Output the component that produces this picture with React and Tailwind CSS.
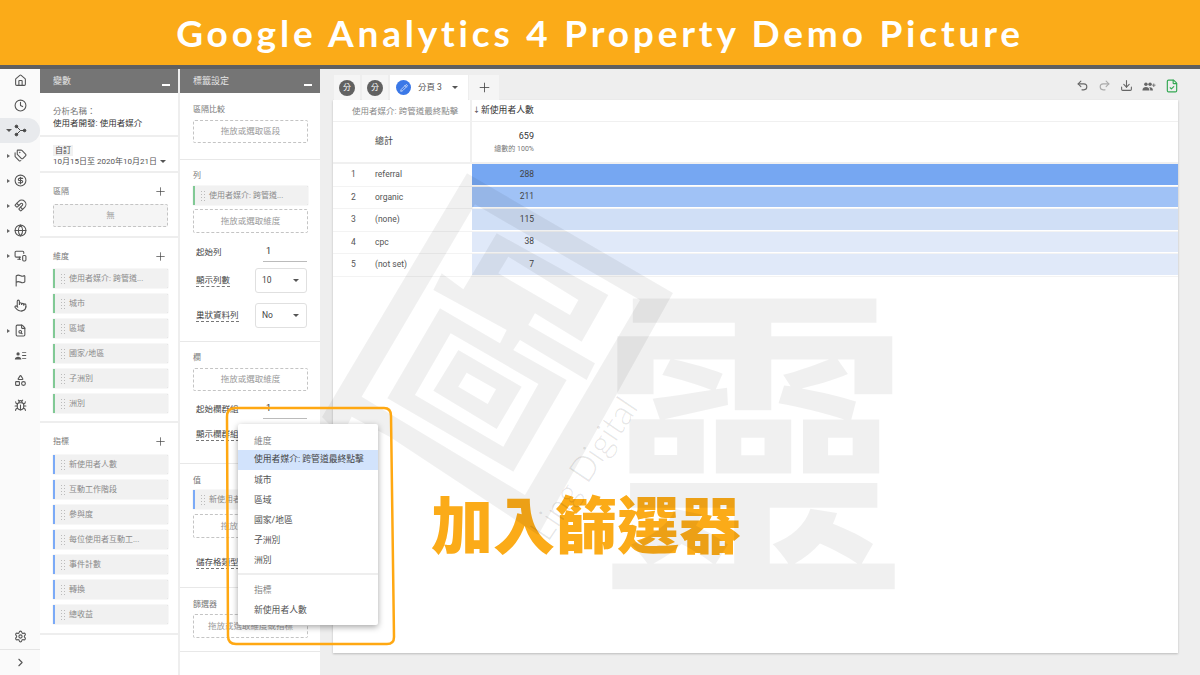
import {
  House, Clock, Tags, CircleDollarSign, Magnet, Globe, MonitorSmartphone, Flag, Pointer,
  FileSearch, Shapes, Bug, Settings, ChevronRight, Plus, Undo2, Redo2, Download,
  FileCheck, Pencil,
} from "lucide-react";

const cjk = "font-['Roboto','Noto_Sans_CJK_TC',sans-serif]";

function ExploreIcon() {
  return (
    <svg viewBox="0 0 16 16" className="w-[13px] h-[13px]" fill="#444" stroke="#444" strokeWidth="1.2">
      <path d="M3 3 L8 8 L3 13 M8 8 H13" fill="none" />
      <circle cx="3" cy="3" r="1.6" />
      <circle cx="3" cy="13" r="1.6" />
      <circle cx="13" cy="8" r="1.6" />
    </svg>
  );
}

function ListUserIcon() {
  return (
    <svg viewBox="0 0 16 16" className="w-[13px] h-[13px]" fill="#555">
      <circle cx="5" cy="6" r="2" />
      <path d="M1 13c0-2.500 2-3.500 4-3.500s4 1 4 3.500z" />
      <path d="M10 4h5v1h-5zM10 7.500h5v1h-5zM10 11h5v1h-5z" />
    </svg>
  );
}

function GroupAddIcon() {
  return (
    <svg viewBox="0 0 16 16" className="w-[14px] h-[14px]" fill="#666">
      <circle cx="4.500" cy="6" r="2" />
      <circle cx="9.200" cy="6" r="2" />
      <path d="M0.500 13c0-2.600 2-3.800 4-3.800s4 1.200 4 3.800z" />
      <path d="M9.400 13c0-1.500-.5-2.700-1.400-3.500 2.400-.6 4.500.8 4.500 3.500z" />
      <path d="M13 5h1v1.500h1.500v1H14V9h-1V7.500h-1.500v-1H13z" />
    </svg>
  );
}

function Caret({ className = "" }) {
  return <span className={`inline-block w-0 h-0 border-x-[3px] border-x-transparent border-t-[3px] border-t-[#555] ${className}`} />;
}

const navIcons = [
  [<House size={13} />, false],
  [<Clock size={13} />, false],
  [<ExploreIcon />, true, true],
  [<Tags size={13} />, true],
  [<CircleDollarSign size={13} />, true],
  [<Magnet size={13} />, true],
  [<Globe size={13} />, true],
  [<MonitorSmartphone size={13} />, true],
  [<Flag size={13} />, false],
  [<Pointer size={13} />, false],
  [<FileSearch size={13} />, true],
  [<ListUserIcon />, false],
  [<Shapes size={13} />, false],
  [<Bug size={13} />, false],
];

function Sidebar() {
  return (
    <aside className="w-[40px] h-full bg-[#fafafa] flex flex-col text-[#555]">
      <div className="flex flex-col -mt-[1px]">
        {navIcons.map(([icon, hasArrow, active], i) => (
          <div
            key={i}
            className={`relative h-[25px] flex items-center justify-center pl-[1px] ${active ? "bg-[#e8eaed] rounded-r-full" : ""}`}
          >
            {hasArrow && !active && <span className="absolute left-[7px] w-0 h-0 border-y-[2.5px] border-y-transparent border-l-[3px] border-l-[#666]" />}
            {active && <Caret className="absolute left-[6px]" />}
            {icon}
          </div>
        ))}
      </div>
      <div className="mt-auto">
        <div className="h-[26px] flex items-center justify-center border-b border-[#e5e5e5]">
          <Settings size={13} />
        </div>
        <div className="h-[25px] flex items-center justify-center">
          <ChevronRight size={13} />
        </div>
      </div>
    </aside>
  );
}

function PanelHeader({ title }) {
  return (
    <div className="h-[24px] bg-[#757575] text-[#e4e4e4] text-[9px] flex items-center justify-between pl-[13px] pr-[8px] pt-[1px]">
      <span>{title}</span>
      <span className="w-[8px] h-[1.5px] bg-white mt-[7px]" />
    </div>
  );
}

function Chip({ label, blue }) {
  return (
    <div
      className={`h-[19px] mb-[6px] bg-[#f1f1f1] border-l-2 ${blue ? "border-l-[#7baaf7]" : "border-l-[#81c995]"} shadow-[0_0_1px_#aaa] flex items-center text-[8px] text-[#8a8a8a] rounded-r-[1px] whitespace-nowrap`}
    >
      <span className="w-[5px] h-[11px] ml-[5px] mr-[4px] bg-[radial-gradient(#bbb_1px,transparent_1px)] bg-[length:3px_3px]" />
      {label}
    </div>
  );
}

function Dashed({ label, className = "" }) {
  return (
    <div className={`border border-dashed border-[#c4c4c4] rounded-[2px] flex items-center justify-center text-[8.5px] text-[#9a9a9a] ${className}`}>
      {label}
    </div>
  );
}

function Label({ children, right }) {
  return (
    <div className="h-[12px] flex items-center justify-between text-[8px] text-[#777] pt-[1px]">
      <span>{children}</span>
      {right && <Plus size={13} strokeWidth={1.3} className="text-[#444] mr-[1px]" />}
    </div>
  );
}

function VariablesPanel() {
  const dimensions = ["使用者媒介: 跨管道...", "城市", "區域", "國家/地區", "子洲別", "洲別"];
  const metrics = ["新使用者人數", "互動工作階段", "參與度", "每位使用者互動工...", "事件計數", "轉換", "總收益"];
  return (
    <section className="w-[138px] h-full bg-white">
      <PanelHeader title="變數" />
      <div className="h-[44px] pl-[13px] pt-[12px] border-b-2 border-[#eeeeee] text-[8.5px] leading-[12px]">
        <div className="text-[#777]">分析名稱：</div>
        <div className="text-[#333]">使用者開發: 使用者媒介</div>
      </div>
      <div className="h-[36px] pl-[13px] pt-[8px] border-b-2 border-[#eeeeee] text-[8px] leading-[11px] text-[#555]">
        <span className="bg-[#f1f1f1] px-[2px] text-[8px] text-[#444] block w-fit">自訂</span>
        <div className="flex items-center gap-[3px] whitespace-nowrap">
          10月15日至 2020年10月21日 <Caret />
        </div>
      </div>
      <div className="h-[65px] pl-[13px] pr-[10px] pt-[12px] border-b-2 border-[#eeeeee]">
        <Label right>區隔</Label>
        <Dashed label="無" className="h-[23px] mt-[7px] bg-[#f5f5f5]" />
      </div>
      <div className="h-[185px] pl-[13px] pr-[10px] pt-[12px] border-b-2 border-[#eeeeee]">
        <Label right>維度</Label>
        <div className="mt-[7px]">
          {dimensions.map((d) => <Chip key={d} label={d} />)}
        </div>
      </div>
      <div className="h-[212px] pl-[13px] pr-[10px] pt-[12px] border-b-2 border-[#eeeeee]">
        <Label right>指標</Label>
        <div className="mt-[8px]">
          {metrics.map((d) => <Chip key={d} label={d} blue />)}
        </div>
      </div>
    </section>
  );
}

function Setting({ label, value, select, className = "" }) {
  return (
    <div className={`flex items-center justify-between text-[8.5px] text-[#444] ${className}`}>
      <span className="ml-[3px] border-b border-dashed border-[#777] leading-[11px]">{label}</span>
      {select && (
        <div className="w-[52px] h-[25px] mr-[1px] border border-[#e0e0e0] rounded-[3px] flex items-center justify-between pl-[6px] pr-[7px]">
          <span className="text-[#444] text-[8.5px]">{value}</span>
          <Caret />
        </div>
      )}
    </div>
  );
}

function NumberInput({ label, value, className = "" }) {
  return (
    <div className={`flex items-center justify-between text-[8.5px] text-[#444] ${className}`}>
      <span className="ml-[3px]">{label}</span>
      <span className="w-[44px] h-[19px] border-b border-[#bbb] pl-[3px] pt-[2px] text-[9px] text-[#333]">{value}</span>
    </div>
  );
}

function SettingsPanel() {
  return (
    <section className="w-[140px] h-full bg-white ml-[2px]">
      <PanelHeader title="標籤設定" />
      <div className="h-[67px] pl-[13px] pr-[12px] pt-[10px] border-b border-[#e8e8e8]">
        <Label>區隔比較</Label>
        <Dashed label="拖放或選取區段" className="h-[23px] mt-[5px]" />
      </div>
      <div className="h-[182px] pl-[13px] pr-[12px] pt-[9px] border-b border-[#e8e8e8]">
        <Label>列</Label>
        <div className="mt-[5px]"><Chip label="使用者媒介: 跨管道..." /></div>
        <Dashed label="拖放或選取維度" className="h-[24px] -mt-[2px]" />
        <NumberInput label="起始列" value="1" className="mt-[10px] mr-[1px]" />
        <Setting label="顯示列數" value="10" select className="mt-[6px]" />
        <Setting label="巢狀資料列" value="No" select className="mt-[10px]" />
      </div>
      <div className="h-[122px] pl-[13px] pr-[12px] pt-[9px] border-b border-[#e8e8e8]">
        <Label>欄</Label>
        <Dashed label="拖放或選取維度" className="h-[23px] mt-[5px]" />
        <NumberInput label="起始欄群組" value="1" className="mt-[9px] mr-[1px]" />
        <Setting label="顯示欄群組" className="mt-[10px] h-[11px]" />
      </div>
      <div className="h-[124px] pl-[13px] pr-[12px] pt-[10px] border-b border-[#e8e8e8]">
        <Label>值</Label>
        <div className="mt-[4px]"><Chip label="新使用者人數" blue /></div>
        <Dashed label="拖放或選取指標" className="h-[24px] -mt-[1px]" />
        <Setting label="儲存格類型" className="mt-[19px]" />
      </div>
      <div className="h-[64px] pl-[13px] pr-[12px] pt-[10px] border-b border-[#e8e8e8]">
        <Label>篩選器</Label>
        <Dashed label="拖放或選取維度或指標" className="h-[24px] mt-[4px]" />
      </div>
    </section>
  );
}

const rows = [
  ["1", "referral", "288", "bg-[#76a7f2]"],
  ["2", "organic", "211", "bg-[#a0c2f6]"],
  ["3", "(none)", "115", "bg-[#d0dff6]"],
  ["4", "cpc", "38", "bg-[#e0e9f9]"],
  ["5", "(not set)", "7", "bg-[#e0e9f9]"],
];

function Tabs() {
  return (
    <div className="h-[31px] flex items-end justify-between pl-[14px] pr-[21px]">
      <div className="flex gap-[2px] h-[25px]">
        {[0, 1].map((i) => (
          <div key={i} className="w-[26px] bg-[#f5f5f5] flex items-center justify-center">
            <span className="w-[16px] h-[16px] rounded-full bg-[#616161] text-white text-[8px] flex items-center justify-center">分</span>
          </div>
        ))}
        <div className="w-[78px] bg-white flex items-center pl-[6px] text-[8.5px] text-[#555]">
          <span className="w-[15px] h-[15px] rounded-full bg-[#3b78e7] flex items-center justify-center">
            <Pencil size={8} className="text-white" />
          </span>
          <span className="ml-[7px]">分頁 3</span>
          <Caret className="ml-[10px]" />
        </div>
        <div className="w-[30px] -ml-[1px] bg-[#f5f5f5] flex items-center justify-center">
          <Plus size={15} strokeWidth={1.3} className="text-[#444]" />
        </div>
      </div>
      <div className="flex items-center gap-[9px] h-[25px] pb-[4px] text-[#666]">
        <Undo2 size={13} />
        <Redo2 size={13} className="text-[#aaa]" />
        <Download size={13} />
        <GroupAddIcon />
        <FileCheck size={14} className="text-[#34a853]" />
      </div>
    </div>
  );
}

function Report() {
  return (
    <div className="ml-[13px] mr-[22px] h-[553px] bg-white shadow-[0_1px_2px_#bbb] text-[8.5px]">
      <div className="flex h-[22px] border-b border-[#f0f0f0] pt-[1px]">
        <div className="w-[137px] flex items-center pl-[19px] text-[#888] whitespace-nowrap">使用者媒介: 跨管道最終點擊</div>
        <div className="border-l-2 border-[#f0f0f0] -mt-[1px] pl-[1px] flex items-center text-[#333] text-[8.8px]">
          <span className="text-[7px] mr-[1px]">↓</span>新使用者人數
        </div>
      </div>
      <div className="flex h-[42px] border-b-2 border-[#f0f0f0]">
        <div className="w-[137px] flex items-center pl-[42px] text-[#444] text-[9px]">總計</div>
        <div className="border-l-2 border-[#f0f0f0] w-[64px] flex flex-col items-end justify-center gap-[3px] text-right">
          <span className="text-[#333] text-[9px] leading-[11px]">659</span>
          <span className="text-[#777] text-[7px] leading-[9px] whitespace-nowrap">總數的 100%</span>
        </div>
      </div>
      {rows.map(([n, label, value, bar]) => (
        <div key={n} className="flex h-[22.500px] border-b border-[#f3f3f3] text-[#555]">
          <div className="w-[20px] ml-[18px] flex items-center">{n}</div>
          <div className="w-[101px] pl-[4px] flex items-center">{label}</div>
          <div className={`flex-1 mb-[1px] ${bar} flex items-center`}>
            <span className="w-[62px] text-right text-[#444]">{value}</span>
          </div>
        </div>
      ))}
    </div>
  );
}

// watermark logo, coordinates taken from a 3x crop of the reference
function Watermark() {
  const d =
    "M381,-170 L999,189 L595,915 L150,621 L35,560 L20,590 L-25,590 L-54,561 Z " +
    "M405,-77 L900,210 L555,795 L65,500 Z " +
    "M470,10 L805,195 L725,335 L585,250 L565,285 L765,400 L740,450 L540,330 L520,360 L680,450 L520,725 L142,505 L300,235 L480,340 L500,300 L280,180 L305,130 L370,178 Z " +
    "M505,80 L715,210 L690,255 L475,130 Z " +
    "M332,310 L595,462 L490,650 L225,495 Z " +
    "M355,360 L545,470 L470,597 L280,482 Z " +
    "M380,428 L468,478 L443,522 L355,470 Z";
  return (
    <div className="absolute left-[320px] top-0 w-[880px] h-[675px] overflow-hidden pointer-events-none">
      <svg width="880" height="675" viewBox="0 0 880 675">
        <g transform="translate(20 230) scale(0.3333)">
          <path d={d} fill="#000" fillOpacity="0.06" fillRule="evenodd" />
        </g>
      </svg>
      <span className="absolute left-[279px] top-[250px] text-[310px] leading-[350px] scale-y-[1.07] font-bold text-black/[0.06] font-['Noto_Sans_CJK_TC',sans-serif]">靈</span>
      <span className="absolute left-[181px] top-[448px] -rotate-[56deg] text-[34px] leading-[40px] font-light text-black/[0.1] whitespace-nowrap font-['Lato',sans-serif]">Ling Digital</span>
    </div>
  );
}

function ColumnMenu() {
  const items = ["城市", "區域", "國家/地區", "子洲別", "洲別"];
  return (
    <div className="absolute left-[238px] top-[424px] w-[140px] h-[201px] bg-white rounded-[2px] shadow-[0_2px_6px_rgba(0,0,0,0.35)] text-[8.8px] text-[#555]">
      <div className="h-[26px] pl-[16px] pt-[11px] text-[#888] leading-[12px]">維度</div>
      <div className="h-[20px] pl-[16px] bg-[#d2e3fc] flex items-center text-[#444]">使用者媒介: 跨管道最終點擊</div>
      {items.map((item) => (
        <div key={item} className="h-[20px] pl-[16px] flex items-center pt-[1px]">{item}</div>
      ))}
      <div className="h-[5px] border-b-2 border-[#eeeeee]" />
      <div className="h-[20px] pl-[16px] mt-[6px] flex items-center text-[#888]">指標</div>
      <div className="h-[20px] pl-[16px] flex items-center">新使用者人數</div>
    </div>
  );
}

function Outline() {
  return (
    <svg className="absolute left-[220px] top-[400px] pointer-events-none" width="182" height="252" viewBox="220 400 182 252" fill="none">
      <path
        d="M235 408 H384 Q391 408 391 416 L394 637 Q394 644 387 644 H236 Q228 644 228 636 L227 417 Q227 408 235 408 Z"
        stroke="#ffa812"
        strokeWidth="2.5"
      />
    </svg>
  );
}

export default function App() {
  return (
    <div className={`relative w-[1200px] h-[675px] overflow-hidden bg-[#eeeeee] ${cjk}`}>
      <header className="h-[65px] bg-[#fbab18] flex items-center justify-center text-white text-[37px] font-bold tracking-[3.8px] font-['Lato',sans-serif]">
        Google Analytics 4 Property Demo Picture
      </header>
      <div className="h-[4px] bg-[#5f5f5f]" />
      <div className="flex h-[606px]">
        <Sidebar />
        <VariablesPanel />
        <SettingsPanel />
        <main className="flex-1">
          <Tabs />
          <Report />
        </main>
      </div>
      <div className="absolute left-[431px] top-[484px] text-[62px] leading-[76px] font-black text-[#fbab18] font-['Noto_Sans_CJK_TC',sans-serif]">加入篩選器</div>
      <Watermark />
      <ColumnMenu />
      <Outline />
    </div>
  );
}
